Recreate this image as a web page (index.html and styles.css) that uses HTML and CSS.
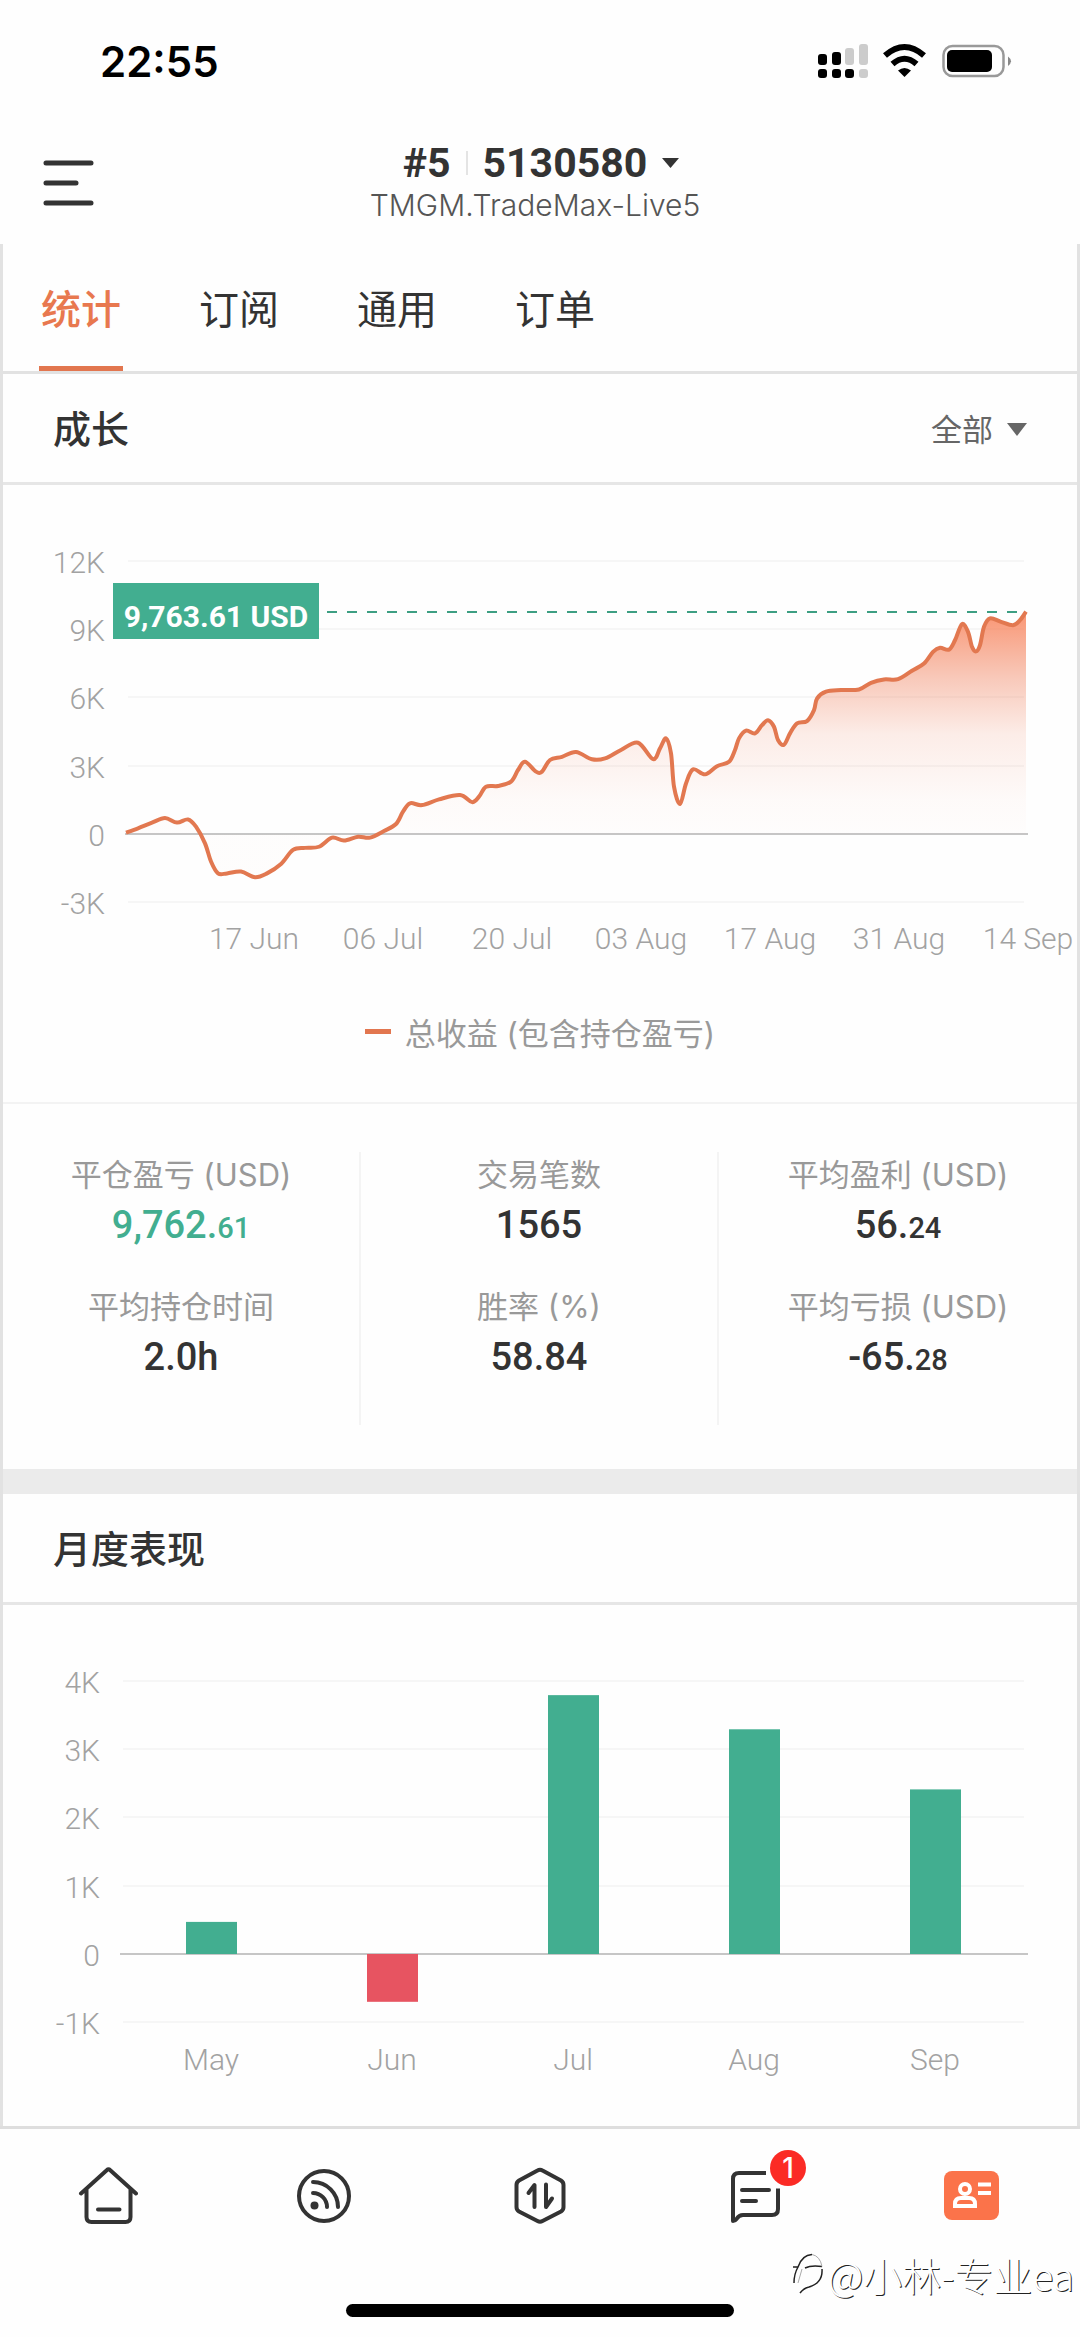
FILE: index.html
```
<!DOCTYPE html>
<html lang="zh-CN">
<head>
<meta charset="UTF-8">
<meta name="viewport" content="width=device-width, initial-scale=1.0">
<title>TMGM.TradeMax-Live5</title>
<link rel="stylesheet" href="styles.css">
</head>
<body>
  <div class="status-bar">
    <span class="time">22:55</span>
    <svg class="status-icons" width="196" height="38" viewBox="0 0 196 38" aria-hidden="true">
      <g fill="#000">
        <rect x="2" y="12" width="9" height="11" rx="3"/>
        <rect x="16" y="10" width="9" height="13" rx="3"/>
        <rect x="2" y="27" width="9" height="9" rx="3"/>
        <rect x="16" y="27" width="9" height="9" rx="3"/>
        <rect x="29" y="27" width="9" height="9" rx="3"/>
      </g>
      <g fill="#ccc">
        <rect x="29" y="6" width="9" height="17" rx="3"/>
        <rect x="43" y="2" width="9" height="21" rx="3"/>
        <rect x="43" y="27" width="9" height="9" rx="3"/>
      </g>
      <path d="M69 13.500Q88.500-3.500 108 13.500M76.500 22Q88.500 11.500 100.500 22" fill="none" stroke="#000" stroke-width="6"/>
      <path d="M82 28.500Q88.500 23.500 95 28.500L88.500 35Z" fill="#000"/>
      <rect x="127.500" y="4" width="60" height="30" rx="9" fill="none" stroke="#999" stroke-width="2.500"/>
      <rect x="131" y="8" width="45" height="22" rx="5" fill="#000"/>
      <path d="M192 14.500Q198 19 192 24Z" fill="#888"/>
    </svg>
  </div>

  <header class="header">
    <button class="menu" aria-label="菜单">
      <svg width="52" height="48" viewBox="0 0 52 48">
        <path d="M4 4H49M4 24H34M4 44H49" stroke="#333" stroke-width="5" stroke-linecap="round"/>
      </svg>
    </button>
    <div class="account">
      <button class="account-select">
        <span>#5</span>
        <span class="bar"></span>
        <span>5130580</span>
        <svg width="17" height="10" viewBox="0 0 17 10"><path d="M0 0H17L8.500 10Z" fill="#333"/></svg>
      </button>
      <p class="server">TMGM.TradeMax-Live5</p>
    </div>
  </header>

  <main>
    <nav class="tabs">
      <a href="#stats" class="active">统计</a>
      <a href="#subscribe">订阅</a>
      <a href="#general">通用</a>
      <a href="#orders">订单</a>
    </nav>

    <section id="stats">
      <div class="section-head">
        <h2>成长</h2>
        <label class="range">
          <select aria-label="时间范围">
            <option>全部</option>
          </select>
          <svg width="20" height="13" viewBox="0 0 20 13"><path d="M0 0H20L10 13Z" fill="#666"/></svg>
        </label>
      </div>
      <svg class="chart" id="growthChart" viewBox="0 0 1074 500" role="img" aria-label="成长">
        <defs>
          <linearGradient id="growthFill" gradientUnits="userSpaceOnUse" x1="0" y1="127" x2="0" y2="349">
            <stop offset="0" stop-color="#f97b50" stop-opacity="0.8"/>
            <stop offset="0.3" stop-color="#f0805c" stop-opacity="0.42"/>
            <stop offset="0.55" stop-color="#f0805c" stop-opacity="0.14"/>
            <stop offset="0.85" stop-color="#f0805c" stop-opacity="0.03"/>
            <stop offset="1" stop-color="#f0805c" stop-opacity="0.01"/>
          </linearGradient>
        </defs>
      </svg>
      <div class="legend"><span class="legend-mark"></span>总收益 (包含持仓盈亏)</div>

      <div class="summary">
        <dl>
          <dt>平仓盈亏 (USD)</dt>
          <dd class="profit">9,762.<small>61</small></dd>
          <dt>平均持仓时间</dt>
          <dd>2.0h</dd>
        </dl>
        <dl>
          <dt>交易笔数</dt>
          <dd>1565</dd>
          <dt>胜率 (%)</dt>
          <dd>58.84</dd>
        </dl>
        <dl>
          <dt>平均盈利 (USD)</dt>
          <dd>56.<small>24</small></dd>
          <dt>平均亏损 (USD)</dt>
          <dd>-65.<small>28</small></dd>
        </dl>
      </div>
    </section>

    <section class="monthly">
      <div class="section-head">
        <h2>月度表现</h2>
      </div>
      <svg class="chart" id="monthlyChart" viewBox="0 0 1074 500" role="img" aria-label="月度表现"></svg>
    </section>
  </main>

  <nav class="tabbar">
    <a href="#home" aria-label="首页">
      <svg class="icon" width="60" height="60" viewBox="0 0 60 60">
        <path d="M3 27.500L29 4Q30.500 2.500 32 4L58 27.500M8.500 23V51Q8.500 56 13.500 56H47.500Q52.500 56 52.500 51V23M20 43.500H41.500"/>
      </svg>
    </a>
    <a href="#feed" aria-label="动态">
      <svg class="icon" width="60" height="60" viewBox="0 0 60 60">
        <circle cx="30" cy="30" r="25"/>
        <path d="M19 27A14 14 0 0 1 33 41M19 16A25 25 0 0 1 44 41"/>
        <circle class="solid" cx="20.500" cy="39.500" r="4"/>
      </svg>
    </a>
    <a href="#trade" aria-label="交易">
      <svg class="icon" width="60" height="60" viewBox="0 0 60 60">
        <path d="M27.500 4.500Q30 3 32.500 4.500L51 14.500Q53.500 16 53.500 19V41Q53.500 44 51 45.500L32.500 55Q30 56.500 27.500 55L9 45.500Q6.500 44 6.500 41V19Q6.500 16 9 14.500Z"/>
        <path d="M18.500 27L24.500 19V41M36 18.500V41L42 32.500"/>
      </svg>
    </a>
    <a href="#messages" class="messages" aria-label="消息">
      <svg class="icon" width="60" height="60" viewBox="0 0 60 60">
        <path d="M40 7H13Q7 7 7 13V55Q9 55 10.500 53Q13 49 17 49H46Q52 49 52 43V22.500" stroke-linecap="butt"/>
        <path d="M16 24H43M16 35H30"/>
      </svg>
      <span class="badge">1</span>
    </a>
    <a href="#profile" aria-label="我的">
      <svg width="60" height="60" viewBox="0 0 60 60">
        <rect x="2" y="5" width="55" height="49" rx="8" fill="#fb734a"/>
        <g fill="none" stroke="#fff" stroke-width="4">
          <circle cx="23" cy="23" r="5"/>
          <path d="M13 40V38Q13 32 19 32H27Q33 32 33 38V40Z"/>
          <path d="M36 18.500H49M36 27H49"/>
        </g>
      </svg>
    </a>
  </nav>
  <div class="home-indicator"></div>

  <div class="watermark">
    <svg width="34" height="44" viewBox="0 0 34 44" fill="none" stroke="#222" stroke-width="1">
      <path d="M2 15H7Q11 3 21 2.500M7 15Q3 22 3 31M14 16Q20 13 31 14.500M31 17Q32 31 18 35Q13 36 9 41" stroke-width="1.500"/>
      <path d="M21 2.500Q29 4 31 14.500M7 31L11 17" stroke="#aaa"/>
    </svg>@小林-专业ea
  </div>

  <script src="charts.js"></script>
</body>
</html>
```
FILE: styles.css
```
* {
  box-sizing: border-box;
}
body {
  position: relative;
  margin: 0;
  font-family: Inter, "Noto Sans CJK SC", sans-serif;
  font-size: 31px;
  color: #333;
  background-color: #fefefe;
}
h2, p, dl, dd {
  margin: 0;
}
a {
  color: inherit;
  text-decoration: none;
}
button {
  padding: 0;
  border: 0;
  background: none;
  color: inherit;
  font: inherit;
}
svg {
  display: block;
}

/* top */
.status-bar {
  display: flex;
  justify-content: space-between;
  align-items: center;
  height: 122px;
  padding: 0 68px 0 100px;
}
.time {
  font-size: 42px;
  font-weight: 600;
  color: #000;
}
.header {
  display: grid;
  grid-template-columns: 1fr auto 1fr;
  align-items: center;
  height: 122px;
  padding: 0 52px 0 42px;
}
.menu {
  justify-self: start;
}
.account {
  text-align: center;
}
.account-select {
  display: flex;
  align-items: center;
  justify-content: center;
  gap: 15px;
  width: 100%;
  height: 44px;
  padding-left: 12px;
  font-family: Roboto, sans-serif;
  font-size: 41px;
  font-weight: 700;
}
.bar {
  width: 2px;
  height: 24px;
  background-color: #e4e4e4;
}
.server {
  font-size: 30px;
  font-weight: 300;
  line-height: 40px;
  color: #555;
}

/* scrolling pane */
main {
  padding-bottom: 21px;
  border: solid #e2e2e2;
  border-width: 0 3px;
}
.tabs {
  display: flex;
  gap: 74px;
  height: 130px;
  padding-left: 36px;
  border-bottom: 3px solid #e2e2e2;
  font-size: 40px;
}
.tabs a {
  padding: 0 2px;
  line-height: 131px;
}
.tabs .active {
  height: 127px;
  color: #e8784f;
  font-weight: 500;
  border-bottom: 5px solid #e2764f;
}
.section-head {
  display: flex;
  justify-content: space-between;
  align-items: center;
  height: 111px;
  padding: 0 50px 3px;
  border-bottom: 3px solid #e6e6e6;
}
h2 {
  font-size: 38px;
  font-weight: 500;
}
.range {
  display: flex;
  align-items: center;
  gap: 14px;
  padding-top: 5px;
}
.range select {
  appearance: none;
  padding: 0;
  border: 0;
  background: none;
  font: inherit;
  color: #666;
}
.chart {
  width: 100%;
  font-family: Roboto, sans-serif;
  font-size: 30px;
  font-weight: 300;
  fill: #a2a2a2;
}
.chart .grid {
  stroke: #f6f6f6;
  stroke-width: 2;
}
.chart .zero {
  stroke: #c6c6c6;
}
.chart .end {
  text-anchor: end;
}
.chart .mid {
  text-anchor: middle;
}
.chart .line {
  fill: none;
  stroke: #e27850;
  stroke-width: 4;
  stroke-linejoin: round;
}
.chart .area {
  fill: url(#growthFill);
}
.chart .current {
  stroke: #3d9f83;
  stroke-width: 2;
  stroke-dasharray: 10 10;
}
.chart .up {
  fill: #42ae90;
}
.chart .down {
  fill: #e75461;
}
.chart .tag {
  fill: #fff;
  font-weight: 700;
}
.legend {
  display: flex;
  justify-content: center;
  align-items: center;
  gap: 14px;
  height: 119px;
  padding-bottom: 24px;
  border-bottom: 2px solid #f3f3f3;
  color: #999;
}
.legend-mark {
  width: 26px;
  height: 5px;
  background-color: #e2764f;
}
.summary {
  display: grid;
  grid-template-columns: repeat(3, 1fr);
  padding: 48px 0 44px;
}
.summary dl {
  height: 273px;
  border-right: 2px solid #f4f4f4;
  text-align: center;
}
.summary dl:last-child {
  border-right: 0;
}
.summary dt {
  line-height: 46px;
  color: #999;
}
.summary dd {
  height: 54px;
  margin-bottom: 32px;
  font-family: Roboto, sans-serif;
  font-size: 38px;
  font-weight: 500;
  line-height: 54px;
}
.summary small {
  font-size: 29px;
  line-height: 30px;
}
.summary .profit {
  color: #42ae90;
}
.monthly {
  border-top: 25px solid #ebebeb;
}

/* bottom */
.tabbar {
  display: grid;
  grid-template-columns: repeat(5, 1fr);
  place-items: center;
  height: 137px;
  border-top: 3px solid #dedede;
}
.icon {
  fill: none;
  stroke: #333;
  stroke-width: 4;
  stroke-linecap: round;
  stroke-linejoin: round;
}
.icon .solid {
  fill: #333;
  stroke: none;
}
.messages {
  position: relative;
}
.badge {
  position: absolute;
  top: -16px;
  right: -20px;
  width: 36px;
  height: 36px;
  border-radius: 50%;
  background-color: #fb2b25;
  color: #fff;
  font-size: 28px;
  font-weight: 500;
  line-height: 36px;
  text-align: center;
}
.home-indicator {
  width: 36%;
  height: 13px;
  margin: 41px auto 20px;
  border-radius: 7px;
  background-color: #000;
}
.watermark {
  position: absolute;
  right: 6px;
  bottom: 36px;
  display: flex;
  align-items: center;
  gap: 3px;
  color: #fff;
  font-family: "Noto Sans CJK SC", sans-serif;
  font-size: 39px;
  font-weight: 300;
  line-height: 54px;
  text-shadow: 1px 1px 0 #222;
}
```
FILE: charts.js
```
const NS = 'http://www.w3.org/2000/svg';
const ZERO = 349;
const STEP = 68.3;

function add(svg, tag, attrs, text) {
  const el = document.createElementNS(NS, tag);
  for (const key in attrs) el.setAttribute(key, attrs[key]);
  if (text) el.textContent = text;
  svg.appendChild(el);
  return el;
}

function yOf(value, unit) {
  return ZERO - value / unit * STEP;
}

function drawGrid(svg, labels, unit, left) {
  labels.forEach(k => {
    const y = Math.round(yOf(k * 1000, unit));
    const zero = k === 0;
    add(svg, 'line', { class: zero ? 'grid zero' : 'grid', x1: left + (zero ? 0 : 3), x2: zero ? 1025 : 1021, y1: y, y2: y });
    add(svg, 'text', { class: 'end', x: left - 20, y: y + 12 }, zero ? '0' : k + 'K');
  });
}

// smooth curve through all points
function curve(p) {
  let d = `M${p[0][0]} ${p[0][1]}`;
  for (let i = 0; i < p.length - 1; i++) {
    const a = p[i - 1] || p[i], b = p[i], c = p[i + 1], e = p[i + 2] || c;
    d += `C${b[0] + (c[0] - a[0]) / 6} ${b[1] + (c[1] - a[1]) / 6} ${c[0] - (e[0] - b[0]) / 6} ${c[1] - (e[1] - b[1]) / 6} ${c[0]} ${c[1]}`;
  }
  return d;
}

const growth = [
  [123, 60], [135, 250], [149, 500], [162, 700], [174, 500], [185, 640], [193, 320], [202, -410],
  [208, -1210], [215, -1730], [224, -1730], [238, -1650], [252, -1900], [264, -1730], [278, -1320],
  [290, -700], [302, -610], [316, -560], [329, -160], [341, -290], [355, -120], [367, -160], [381, 130],
  [393, 440], [400, 980], [407, 1350], [419, 1270], [436, 1520], [457, 1710], [469, 1400], [476, 1640],
  [483, 2080], [495, 2110], [508, 2300], [515, 2810], [522, 3170], [533, 2740], [539, 2740], [547, 3250],
  [559, 3390], [573, 3600], [589, 3280], [602, 3320], [618, 3690], [635, 4010], [650, 3290], [657, 3760],
  [663, 4200], [668, 3540], [671, 2080], [677, 1320], [683, 2220], [690, 2840], [702, 2620], [714, 2980],
  [726, 3170], [732, 3690], [736, 4200], [743, 4540], [752, 4420], [759, 4780], [765, 5000], [771, 4710],
  [775, 4130], [781, 3920], [787, 4420], [794, 4860], [804, 4960], [811, 5440], [814, 5950], [823, 6250],
  [838, 6320], [856, 6350], [868, 6640], [881, 6790], [895, 6800], [909, 7170], [921, 7490], [930, 8000],
  [937, 8180], [946, 8100], [952, 8510], [959, 9220], [965, 8880], [969, 8220], [973, 8020], [977, 8300],
  [981, 9100], [987, 9470], [998, 9320], [1010, 9170], [1017, 9390], [1023, 9763.61]
];

function drawGrowth() {
  const svg = document.getElementById('growthChart');
  drawGrid(svg, [12, 9, 6, 3, 0, -3], 3000, 122);
  const points = growth.map(([x, v]) => [x, yOf(v, 3000)]);
  const line = curve(points);
  add(svg, 'path', { class: 'area', d: `${line}V${ZERO}H123Z` });
  add(svg, 'line', { class: 'current', x1: 324, x2: 1023, y1: 127, y2: 127 });
  add(svg, 'path', { class: 'line', d: line });
  add(svg, 'rect', { class: 'up', x: 110, y: 98, width: 206, height: 56 });
  add(svg, 'text', { class: 'tag mid', x: 213, y: 142 }, '9,763.61 USD');
  ['17 Jun', '06 Jul', '20 Jul', '03 Aug', '17 Aug', '31 Aug', '14 Sep'].forEach((label, i) => {
    add(svg, 'text', { class: 'mid', x: 251 + i * 129, y: 464 }, label);
  });
}

const months = [['May', 470], ['Jun', -700], ['Jul', 3790], ['Aug', 3290], ['Sep', 2410]];

function drawMonthly() {
  const svg = document.getElementById('monthlyChart');
  drawGrid(svg, [4, 3, 2, 1, 0, -1], 1000, 117);
  months.forEach(([name, value], i) => {
    const x = 208 + i * 181;
    const y = yOf(value, 1000);
    add(svg, 'rect', { class: value < 0 ? 'down' : 'up', x: x - 25, y: Math.min(y, ZERO), width: 51, height: Math.abs(y - ZERO) });
    add(svg, 'text', { class: 'mid', x: x, y: 465 }, name);
  });
}

drawGrowth();
drawMonthly();
```
